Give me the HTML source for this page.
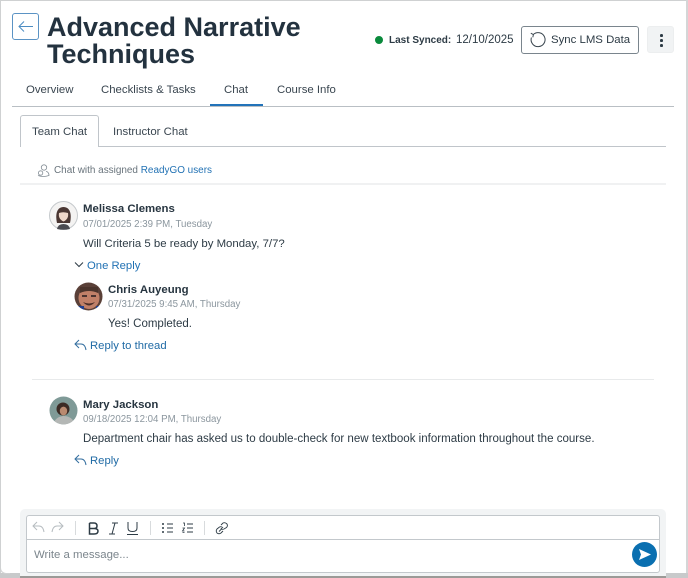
<!DOCTYPE html>
<html><head><meta charset="utf-8"><style>
*{box-sizing:border-box}
html,body{margin:0;padding:0;width:688px;height:578px;overflow:hidden;background:#fff}
body{font-family:"Liberation Sans",sans-serif;color:#2d3b45;position:relative}
.a{position:absolute;white-space:nowrap}
.n{font-size:11.4px;font-weight:700;color:#273540}
.d{font-size:9.7px;color:#8b969e}
.t{font-size:11.5px;color:#2d3b45}
.l{font-size:11.3px;color:#2272b4}
.tab{font-size:11.4px;color:#3a4650}
svg{position:absolute;overflow:visible}
</style></head><body>
<div class="a" style="left:0;top:0;width:688px;height:1px;background:#cfd1d2"></div>
<div class="a" style="left:0;top:0;width:1px;height:578px;background:#cfd1d2"></div>
<div class="a" style="left:686px;top:0;width:2px;height:578px;background:#d4d6d7"></div>
<div class="a" style="left:12px;top:13px;width:27px;height:27px;border:1px solid #5b93c4;border-radius:3px"></div>
<svg style="left:12px;top:13px" width="27" height="27" fill="none" stroke="#4c8cc2" stroke-width="1"><path d="M7 13.500H21M12 8.500L7 13.500L12 18.500"/></svg>
<div class="a" style="left:47px;top:14px;font-size:27px;line-height:27px;font-weight:700;color:#23323f">Advanced Narrative<br>Techniques</div>
<div class="a" style="left:375px;top:36px;width:8px;height:8px;border-radius:50%;background:#0a8a3c"></div>
<div class="a" style="left:389px;top:35px;font-size:10px;font-weight:700;color:#2d3b45">Last Synced:</div>
<div class="a" style="left:456px;top:34px;font-size:11.5px;color:#2d3b45">12/10/2025</div>
<div class="a" style="left:521px;top:26px;width:118px;height:28px;border:1px solid #7a858d;border-radius:3px;background:#fff"></div>
<svg style="left:529px;top:31px" width="18" height="18" fill="none" stroke="#39454e" stroke-width="1"><path d="M4.200 3.600A7 7 0 1 1 2.400 6.500M1.800 2.200L4.400 3.600L3.800 6.300"/></svg>
<div class="a" style="left:551px;top:34px;font-size:11.4px;color:#2d3b45">Sync LMS Data</div>
<div class="a" style="left:647px;top:26px;width:27px;height:27px;border-radius:3px;background:#f1f3f4;border:1px solid #eceeef"></div>
<div class="a" style="left:660px;top:34px;width:2.6px;height:2.6px;border-radius:50%;background:#2d3b45"></div>
<div class="a" style="left:660px;top:39px;width:2.6px;height:2.6px;border-radius:50%;background:#2d3b45"></div>
<div class="a" style="left:660px;top:44px;width:2.6px;height:2.6px;border-radius:50%;background:#2d3b45"></div>
<div class="tab a" style="left:26px;top:84px">Overview</div>
<div class="tab a" style="left:101px;top:84px">Checklists &amp; Tasks</div>
<div class="tab a" style="left:224px;top:84px">Chat</div>
<div class="tab a" style="left:277px;top:84px">Course Info</div>
<div class="a" style="left:12px;top:106px;width:662px;height:1px;background:#b9bfc4"></div>
<div class="a" style="left:210px;top:104px;width:53px;height:2px;background:#2273b9"></div>
<div class="a" style="left:20px;top:146px;width:646px;height:1px;background:#c0c5ca"></div>
<div class="a" style="left:20px;top:115px;width:79px;height:32px;border:1px solid #c0c5ca;border-bottom:0;border-radius:3px 3px 0 0;background:#fff"></div>
<div class="tab a" style="left:32px;top:126px">Team Chat</div>
<div class="tab a" style="left:113px;top:126px">Instructor Chat</div>
<svg style="left:37px;top:164px" width="13" height="13" fill="none" stroke="#838d95" stroke-width=".8"><circle cx="7" cy="3.500" r="2.700"/><circle cx="3.600" cy="9" r="2.200"/><path d="M1 11.500Q6 13.500 12 11.500Q12 8 9 7.200"/></svg>
<div class="a" style="left:54px;top:165px;font-size:9.95px;color:#69747c">Chat with assigned <span style="color:#2272b4">ReadyGO users</span></div>
<div class="a" style="left:20px;top:183px;width:646px;height:2px;background:#f0f1f2"></div>

<svg style="left:49px;top:201px" width="29" height="29" viewBox="0 0 29 29"><circle cx="14.500" cy="14.500" r="14" fill="#f4f3f2" stroke="#c6cacd"/><path d="M8 22C6 13 8 6 14.500 6S23 13 21 22Z" fill="#4a3632"/><path d="M10 12Q14 10.500 19 12Q20 18 14.500 20.500Q9 18 10 12Z" fill="#eed6c8"/><path d="M8 28Q9 23 14.500 23T21 28Q14.500 29.500 8 28Z" fill="#4a4a50"/></svg>
<div class="a n" style="left:83px;top:203px">Melissa Clemens</div>
<div class="a d" style="left:83px;top:219px">07/01/2025 2:39 PM, Tuesday</div>
<div class="a t" style="left:83px;top:238px;font-size:11.4px">Will Criteria 5 be ready by Monday, 7/7?</div>
<svg style="left:74px;top:261px" width="10" height="8" fill="none" stroke="#2d3b45" stroke-width="1"><path d="M1 1.500L5 5.500L9 1.500"/></svg>
<div class="a l" style="left:87px;top:260px">One Reply</div>

<svg style="left:74px;top:282px" width="29" height="29" viewBox="0 0 29 29"><defs><clipPath id="c1"><circle cx="14.500" cy="14.500" r="14"/></clipPath></defs><g clip-path="url(#c1)"><rect width="29" height="29" fill="#5a4038"/><ellipse cx="15" cy="16" rx="10.500" ry="11" fill="#c08068"/><path d="M6 11Q15 7 24 11V5H6Z" fill="#4a342c"/><path d="M9 20Q15 27 21 20Q15 23 9 20Z" fill="#4a2e28"/><rect x="8" y="13" width="5" height="2" fill="#4a3430"/><rect x="17" y="13" width="5" height="2" fill="#4a3430"/><rect x="2" y="24" width="8" height="5" fill="#1e3f8f"/><rect x="22" y="24" width="7" height="5" fill="#1e3f8f"/></g></svg>
<div class="a n" style="left:108px;top:284px">Chris Auyeung</div>
<div class="a d" style="left:108px;top:299px">07/31/2025 9:45 AM, Thursday</div>
<div class="a t" style="left:108px;top:318px">Yes! Completed.</div>
<svg style="left:74px;top:339px" width="13" height="12" fill="none" stroke="#336e9f" stroke-width="1"><path d="M5 1L1 5L5 9M1 5H7Q11 5 12 11"/></svg>
<div class="a l" style="left:90px;top:340px;color:#1f6aa5">Reply to thread</div>

<div class="a" style="left:32px;top:379px;width:622px;height:1px;background:#e8eaeb"></div>

<svg style="left:49px;top:396px" width="29" height="29" viewBox="0 0 29 29"><defs><clipPath id="c2"><circle cx="14.500" cy="14.500" r="14"/></clipPath></defs><g clip-path="url(#c2)"><rect width="29" height="29" fill="#7f9a97"/><circle cx="14" cy="13" r="6.500" fill="#3b2a24"/><ellipse cx="14.500" cy="15" rx="3.700" ry="4.400" fill="#b98a70"/><path d="M4 29Q6 21 14 20Q24 20 26 29Z" fill="#b4b7b5"/></g></svg>
<div class="a n" style="left:83px;top:399px">Mary Jackson</div>
<div class="a d" style="left:83px;top:414px">09/18/2025 12:04 PM, Thursday</div>
<div class="a t" style="left:83px;top:433px;font-size:11.55px">Department chair has asked us to double-check for new textbook information throughout the course.</div>
<svg style="left:74px;top:454px" width="13" height="12" fill="none" stroke="#336e9f" stroke-width="1"><path d="M5 1L1 5L5 9M1 5H7Q11 5 12 11"/></svg>
<div class="a l" style="left:90px;top:455px;color:#1f6aa5">Reply</div>

<div class="a" style="left:20px;top:509px;width:646px;height:69px;background:#f2f4f5;border-radius:5px 5px 0 0"></div>
<div class="a" style="left:26px;top:515px;width:634px;height:58px;background:#fff;border:1px solid #c3c8cc;border-radius:3px"></div>
<div class="a" style="left:27px;top:539px;width:632px;height:1px;background:#c3c8cc"></div>
<svg style="left:32px;top:520px" width="210" height="16" fill="none" stroke-width="1">
<path d="M5 2L1 6L5 10M1 6H7Q11 6 12 12" stroke="#b6bcc0"/>
<path d="M27 2L31 6L27 10M31 6H25Q21 6 20 12" stroke="#b6bcc0"/>
<path d="M43.500 1V15M118.500 1V15M172.500 1V15" stroke="#d8dbdd"/>
<path d="M57.500 3H62Q65 3 65 6Q65 8.500 62 8.500H57.500V3M62 8.500Q66 8.500 66 11Q66 14 62 14H57.500V8.500" stroke="#2d3b45" stroke-width="1.500"/>
<path d="M80 3H86M77 14H83M83 3L80 14" stroke="#2d3b45"/>
<path d="M96 2V8Q96 11.500 100.500 11.500T105 8V2M95 14.500H106" stroke="#2d3b45"/>
<path d="M135 4H141M135 8H141M135 12H141M155 4H161M155 8H161M155 12H161" stroke="#2d3b45"/>
<path d="M130 3.200h2v1.600h-2zM130 7.200h2v1.600h-2zM130 11.200h2v1.600h-2z" fill="#2d3b45" stroke="none"/>
<path d="M151 3h1.500v3M150.500 8h2l-2 3h2M150.500 12.500h2" stroke="#2d3b45" stroke-width=".8"/>
<path d="M187 11.500L190 8.500M189 5L191 3Q193 2 195 4Q196 6 194.500 7.500L192 9Q190 10 189 8M191 11L189 13Q187 14.500 185 13Q183.500 11 185 9L187.500 7Q189.500 6 191 8" stroke="#2d3b45" stroke-width=".9"/>
</svg>
<div class="a" style="left:34px;top:549px;font-size:11.4px;color:#7b858c">Write a message...</div>
<div class="a" style="left:632px;top:542px;width:25px;height:25px;border-radius:50%;background:#0a6fb0"></div>
<svg style="left:632px;top:542px" width="25" height="25"><path d="M7 7L19 12.500L7 18L9 12.500Z" fill="#fff"/></svg>

<div class="a" style="left:0;top:573px;width:20px;height:5px;background:#c8cacb"></div>
<div class="a" style="left:0;top:568px;width:10px;height:6px;border-left:1px solid #cfd1d2;border-bottom:1px solid #cfd1d2;border-radius:0 0 0 6px;background:#fff"></div>
<div class="a" style="left:666px;top:573px;width:22px;height:5px;background:#c8cacb"></div>
<div class="a" style="left:20px;top:576px;width:646px;height:2px;background:#9b9a97"></div>
</body></html>
